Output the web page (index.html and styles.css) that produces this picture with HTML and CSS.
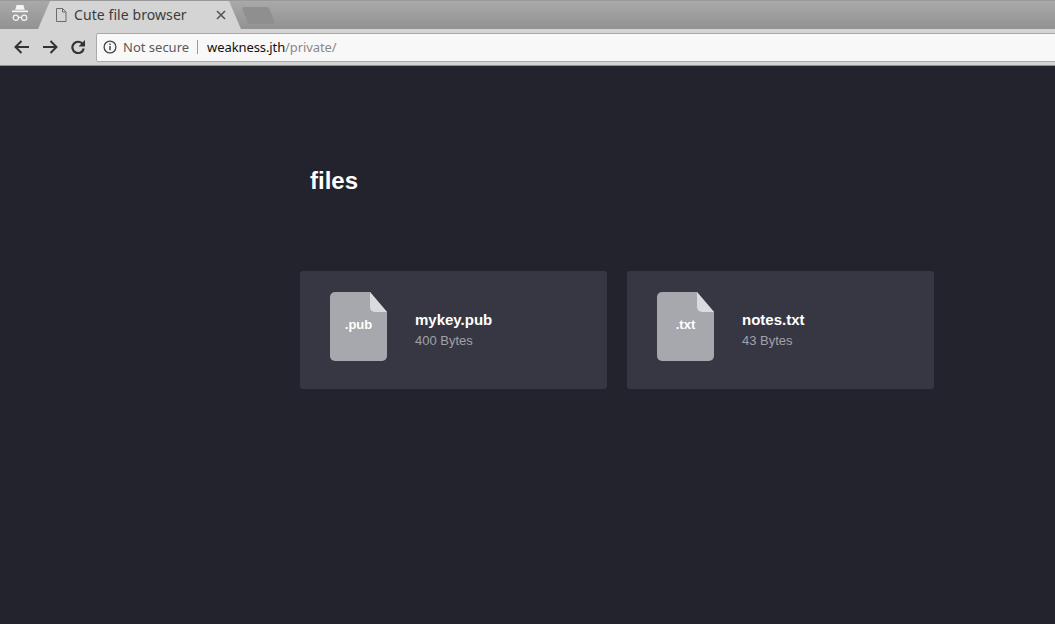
FILE: index.html
```html
<!DOCTYPE html>
<html lang="en">
<head>
    <meta charset="UTF-8">
    <meta name="viewport" content="width=device-width, initial-scale=1.0">
    <title>Cute file browser</title>
    <link rel="stylesheet" href="styles.css">
</head>
<body>
    <header class="browser">
        <div class="tabstrip">
            <div class="incognito">
                <svg width="20" height="18" viewBox="0 0 20 18">
                    <path d="M6.500 0h7l1.300 4.800H5.200z" fill="#f4f4f4"/>
                    <path d="M2 5.500h16v1.700H2z" fill="#f4f4f4"/>
                    <circle cx="5.800" cy="12.800" r="2.600" fill="none" stroke="#f4f4f4" stroke-width="1.200"/>
                    <circle cx="14.200" cy="12.800" r="2.600" fill="none" stroke="#f4f4f4" stroke-width="1.200"/>
                    <path d="M8.400 12.400h3.200" stroke="#f4f4f4" stroke-width="1.200"/>
                </svg>
            </div>
            <div class="tab">
                <svg class="tab-icon" width="12" height="14" viewBox="0 0 12 14">
                    <path d="M1.500.5h6l3.500 3.500v9.500H1.500z M7.500.5V4H11" fill="none" stroke="#6c6c6c"/>
                </svg>
                <span class="tab-title">Cute file browser</span>
                <svg class="tab-close" width="10" height="10" viewBox="0 0 10 10">
                    <path d="M1 1l8 8M9 1l-8 8" stroke="#555" stroke-width="1.600"/>
                </svg>
            </div>
            <div class="new-tab"></div>
        </div>
        <div class="toolbar">
            <svg class="nav-icon" width="16" height="14" viewBox="0 0 16 14">
                <path d="M15 7H2M7.500 1L1.500 7l6 6" fill="none" stroke="#333" stroke-width="2"/>
            </svg>
            <svg class="nav-icon nav-forward" width="16" height="14" viewBox="0 0 16 14">
                <path d="M1 7h13M8.500 1l6 6-6 6" fill="none" stroke="#333" stroke-width="2"/>
            </svg>
            <svg class="nav-icon nav-reload" width="14" height="14" viewBox="0 0 14 14">
                <path d="M11.800 4.200A5.700 5.700 0 1 0 12.700 8.500" fill="none" stroke="#333" stroke-width="2.200"/>
                <path d="M14 0v6.500H7.500z" fill="#333"/>
            </svg>
            <div class="omnibox">
                <svg class="info-icon" width="14" height="14" viewBox="0 0 14 14">
                    <circle cx="7" cy="7" r="5.900" fill="none" stroke="#444" stroke-width="1.300"/>
                    <path d="M7 6v4.300M7 3.500v1.500" stroke="#444" stroke-width="1.500"/>
                </svg>
                <span class="secure-label">Not secure</span>
                <span class="omnibox-sep"></span>
                <span class="url">weakness.jth<span class="url-path">/private/</span></span>
            </div>
        </div>
    </header>

    <main class="filemanager">
        <h1 class="folder-title">files</h1>
        <ul class="file-list">
            <li class="file-card">
                <div class="file-icon"><span>.pub</span></div>
                <div class="file-info">
                    <span class="file-name">mykey.pub</span>
                    <span class="file-size">400 Bytes</span>
                </div>
            </li>
            <li class="file-card">
                <div class="file-icon"><span>.txt</span></div>
                <div class="file-info">
                    <span class="file-name">notes.txt</span>
                    <span class="file-size">43 Bytes</span>
                </div>
            </li>
        </ul>
    </main>
</body>
</html>
```
FILE: styles.css
```css
html, body { margin: 0; padding: 0; height: 100%; }
body { background: #23232e; font-family: "Liberation Sans", Arial, sans-serif; overflow: hidden; }

/* browser chrome */
.browser { font-family: "Noto Sans", "Open Sans", sans-serif; }
.tabstrip { display: flex; height: 29px; background: linear-gradient(#a9a9a9, #929292); border-top: 1px solid #999; box-sizing: border-box; }
.incognito { width: 38px; display: flex; justify-content: center; align-items: flex-start; padding: 4px 0 0 2px; box-sizing: border-box; }
.tab {
    width: 203px; height: 28px; display: flex; align-items: center; box-sizing: border-box; padding: 0 15px 0 17px;
    background: #d4d4d4; clip-path: polygon(12px 0, 191px 0, 203px 100%, 0 100%);
    font-size: 14px; color: #3c3c3c;
}
.tab-icon { flex: none; }
.tab-title { margin: 0 0 2px 7px; flex: 1; letter-spacing: .08px; }
.tab-close { flex: none; }
.new-tab { width: 27px; height: 17px; margin: 6px 0 0 3.500px; background: #8f8f8f; border-radius: 3px; transform: skewX(22deg); }
.toolbar { display: flex; align-items: center; height: 37px; background: #d4d4d4; border-bottom: 1px solid #8f8f8f; box-sizing: border-box; padding-left: 14px; }
.nav-icon { flex: none; margin-right: 12px; }
.nav-forward { margin-right: 13px; }
.nav-reload { margin-right: 11px; }
.omnibox {
    flex: 1; height: 29px; margin-right: -4px; display: flex; align-items: center; box-sizing: border-box; padding-left: 6px;
    background: #f8f8f8; border: 1px solid #a9a9a9; border-radius: 2px; font-size: 13px;
}
.secure-label { margin-left: 6px; color: #5a5a5a; }
.omnibox-sep { width: 1px; height: 14px; background: #9a9a9a; margin: 0 9px 0 8px; }
.url { color: #111; letter-spacing: -.1px; }
.url-path { color: #888; }

/* file list */
.filemanager { width: 634px; margin-left: 300px; }
.folder-title { margin: 0; padding: 101px 0 0 10px; height: 104px; font-size: 24px; line-height: 28px; color: #fff; font-weight: bold; }
.file-list { list-style: none; margin: 0; padding: 0; display: flex; gap: 20px; }
.file-card { width: 307px; height: 118px; box-sizing: border-box; padding: 21px 30px; display: flex; background: #373743; border-radius: 3px; }
.file-icon {
    position: relative; width: 57px; height: 69px; flex: none; display: flex; align-items: center; justify-content: center; box-sizing: border-box; padding-bottom: 5px;
    background: #a6a8ad; border-radius: 5px; font-size: 13px; font-weight: bold; color: #fff;
    clip-path: polygon(0 0, 40px 0, 57px 20px, 57px 100%, 0 100%);
}
.file-icon::after { content: ""; position: absolute; top: 0; right: 0; width: 17px; height: 20px; background: #d9dbe0; border-bottom-left-radius: 5px; }
.file-info { margin: 18px 0 0 28px; display: flex; flex-direction: column; }
.file-name { font-size: 15px; line-height: 20px; font-weight: bold; color: #fff; }
.file-size { font-size: 13px; line-height: 20px; margin-top: 1px; color: #9fa2ac; }
```
